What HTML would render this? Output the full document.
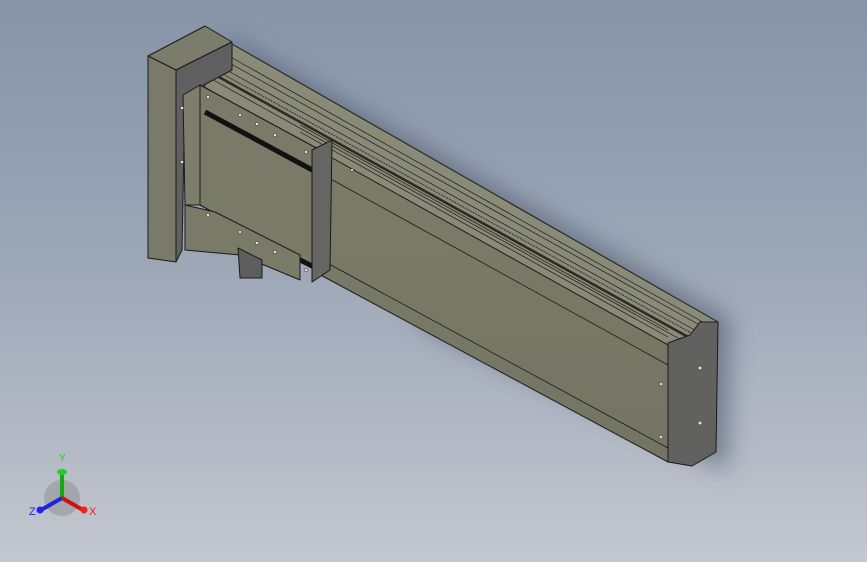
<!DOCTYPE html>
<html><head><style>
html,body{margin:0;padding:0;width:867px;height:562px;overflow:hidden}
body{background:linear-gradient(180deg,#8794a8 0%,#9ba6b6 45%,#c3c7cf 100%);font-family:"Liberation Sans",sans-serif}
svg{position:absolute;left:0;top:0}
</style></head><body>
<svg width="867" height="562" viewBox="0 0 867 562">
<defs>
<filter id="sh" x="-20%" y="-20%" width="140%" height="140%"><feGaussianBlur stdDeviation="12"/></filter>
<linearGradient id="fr" x1="0" y1="0" x2="0" y2="1"><stop offset="0" stop-color="#7c7c6a"/><stop offset="1" stop-color="#747464"/></linearGradient>
</defs>
<polygon points="215,30 730,318 728,470 430,330" fill="#4a5468" opacity="0.6" filter="url(#sh)"/>
<g stroke="#1a1a18" stroke-width="1" stroke-linejoin="round">
<polygon points="205,45 225,40 718,322 705,338 668,345 320,152 205,90" fill="#8a8a78"/>
<line x1="218" y1="50" x2="708" y2="325" stroke-width="0.7"/>
<line x1="215" y1="55" x2="705" y2="328" stroke-width="0.7"/>
<line x1="212" y1="62" x2="700" y2="333" stroke-width="0.7"/>
<line x1="210" y1="67" x2="695" y2="335" stroke="#3a3a34" stroke-width="1.2" stroke-dasharray="2,1"/>
<line x1="208" y1="71" x2="690" y2="338" stroke="#2a2a26" stroke-width="2.5"/>
<line x1="206" y1="76" x2="685" y2="342" stroke-width="0.7"/>
<line x1="300" y1="125" x2="668" y2="330" stroke-width="0.7"/>
<line x1="300" y1="132" x2="668" y2="337" stroke-width="0.7"/>
<polygon points="318,150 668,345 668,462 315,272" fill="url(#fr)"/>
<line x1="318" y1="172" x2="668" y2="365" stroke-width="0.8"/>
<line x1="318" y1="258" x2="668" y2="448" stroke-width="0.8"/>
<polygon points="668,343 690,335 700,322 718,322 716,452 692,466 668,462" fill="#616160"/>
<circle cx="700" cy="368" r="2" fill="#ddd" stroke="#222" stroke-width="0.5"/>
<circle cx="700" cy="423" r="2" fill="#ddd" stroke="#222" stroke-width="0.5"/>
<circle cx="661" cy="384" r="1.8" fill="#ddd" stroke="#222" stroke-width="0.5"/>
<circle cx="661" cy="437" r="1.8" fill="#ddd" stroke="#222" stroke-width="0.5"/>
<polygon points="148,56 205,26 232,42 176,70" fill="#7c7c6c"/>
<polygon points="148,56 176,70 176,262 148,258" fill="#7a7a6a"/>
<polygon points="176,70 232,42 232,70 185,95 182,250 176,262" fill="#606060"/>
<polygon points="183,95 200,85 320,150 318,270 200,205 185,205" fill="#7e7e6c"/>
<polygon points="200,85 320,150 318,270 200,205" fill="#7a7a68"/>
<line x1="205" y1="112" x2="316" y2="172" stroke="#111" stroke-width="5"/>
<line x1="205" y1="212" x2="316" y2="268" stroke="#111" stroke-width="5"/>
<polygon points="312,150 332,140 330,270 312,282" fill="#656562"/>
<polygon points="185,205 215,212 300,255 300,280 240,255 185,250" fill="#7a7a68"/>
<polygon points="238,248 262,260 262,278 240,278" fill="#5e5e5e"/>
</g>
<g fill="#e8e8e8" stroke="#222" stroke-width="0.5">
<circle cx="208" cy="97" r="1.6"/><circle cx="240" cy="115" r="1.6"/><circle cx="257" cy="124" r="1.6"/><circle cx="275" cy="135" r="1.6"/><circle cx="306" cy="152" r="1.6"/>
<circle cx="208" cy="215" r="1.6"/><circle cx="240" cy="232" r="1.6"/><circle cx="257" cy="243" r="1.6"/><circle cx="275" cy="252" r="1.6"/><circle cx="306" cy="270" r="1.6"/>
<circle cx="182" cy="108" r="1.6"/><circle cx="182" cy="162" r="1.6"/>
<circle cx="352" cy="170" r="1.4"/>
</g>
<g>
<circle cx="62" cy="498" r="18" fill="#777" opacity="0.35"/>
<line x1="62" y1="498" x2="62" y2="474" stroke="#1a1" stroke-width="4"/>
<ellipse cx="62" cy="472" rx="5" ry="3" fill="#2c2"/>
<line x1="62" y1="498" x2="41" y2="510" stroke="#22d" stroke-width="4"/>
<circle cx="40" cy="510" r="3.5" fill="#22e"/>
<line x1="62" y1="498" x2="83" y2="510" stroke="#c11" stroke-width="4"/>
<circle cx="84" cy="510" r="3.5" fill="#e22"/>
<text x="59" y="461" font-size="10" fill="#2c2">Y</text>
<text x="29" y="515" font-size="11" fill="#22e">Z</text>
<text x="89" y="515" font-size="11" fill="#e22">X</text>
</g>
</svg>
</body></html>
